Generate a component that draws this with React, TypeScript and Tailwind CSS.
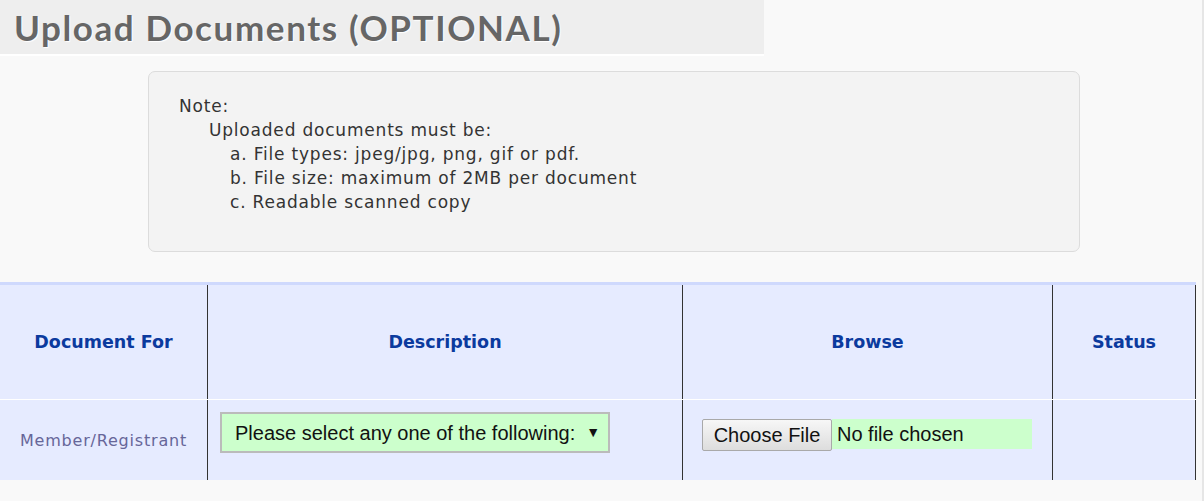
export default function App() {
  const headers = ["Document For", "Description", "Browse", "Status"];

  return (
    <div className="flex min-h-[501px] w-full bg-[#f9f9f9]">
      <div className="w-[1202px]">
        <div className="w-[764px] h-[56px] bg-[#eeeeee] border-b-2 border-white flex items-center pl-[14px]">
          <h1
            className="text-[35px] font-bold text-[#666666] leading-none tracking-[1.6px] [text-shadow:1px_1px_1px_#ffffff]"
            style={{ fontFamily: "Lato, 'DejaVu Sans', sans-serif" }}
          >
            Upload Documents (OPTIONAL)
          </h1>
        </div>

        <div className="ml-[148px] mt-[15px] w-[932px] h-[181px] rounded-[7px] border border-[#dcdcdc] bg-[#f3f3f3] pt-[22px] pl-[30px] text-[17px] tracking-[0.8px] leading-[24px] text-[#333333] font-['DejaVu_Sans',sans-serif]">
          <p>Note:</p>
          <p className="pl-[30px]">Uploaded documents must be:</p>
          <p className="pl-[51px]">a. File types: jpeg/jpg, png, gif or pdf.</p>
          <p className="pl-[51px]">b. File size: maximum of 2MB per document</p>
          <p className="pl-[51px]">c. Readable scanned copy</p>
        </div>

        <div className="mt-[30px] w-[1196px] border-t-[3px] border-[#cfd9fd] bg-[#e6ebff] font-['DejaVu_Sans',sans-serif]">
          <div className="grid grid-cols-[208px_475px_370px_143px] h-[115px] border-b border-white">
            {headers.map((h) => (
              <div
                key={h}
                className="flex items-center justify-center border-r border-[#333333] text-[17.5px] font-bold text-[#0b3a9e]"
              >
                {h}
              </div>
            ))}
          </div>
          <div className="grid grid-cols-[208px_475px_370px_143px] h-[80px]">
            <div className="flex items-center justify-center border-r border-[#333333] text-[16px] tracking-[0.8px] text-[#666699] pt-[1px]">
              Member/Registrant
            </div>
            <div className="border-r border-[#333333] pl-[12px] pt-[12px]">
              <div className="flex items-center justify-between w-[390px] h-[41px] border-2 border-[#bbbbbb] bg-[#ccffcc] pl-[13px] pr-[8px] text-[20px] text-[#111111] font-['Liberation_Sans',Arial,sans-serif]">
                <span>Please select any one of the following:</span>
                <span className="text-[14px]">▼</span>
              </div>
            </div>
            <div className="border-r border-[#333333] pl-[19px] pt-[19px]">
              <div className="flex items-start font-['Liberation_Sans',Arial,sans-serif] text-[20px] text-[#111111]">
                <div className="w-[130px] h-[32px] flex items-center justify-center rounded-[2px] border border-[#a9a9a9] bg-gradient-to-b from-[#f7f7f7] to-[#dddddd]">
                  Choose File
                </div>
                <div className="w-[200px] h-[30px] flex items-center bg-[#ccffcc] pl-[5px]">
                  No file chosen
                </div>
              </div>
            </div>
            <div className="border-r border-[#333333]" />
          </div>
        </div>
      </div>
      <div className="w-[2px] bg-[#e6e6e6]" />
    </div>
  );
}
